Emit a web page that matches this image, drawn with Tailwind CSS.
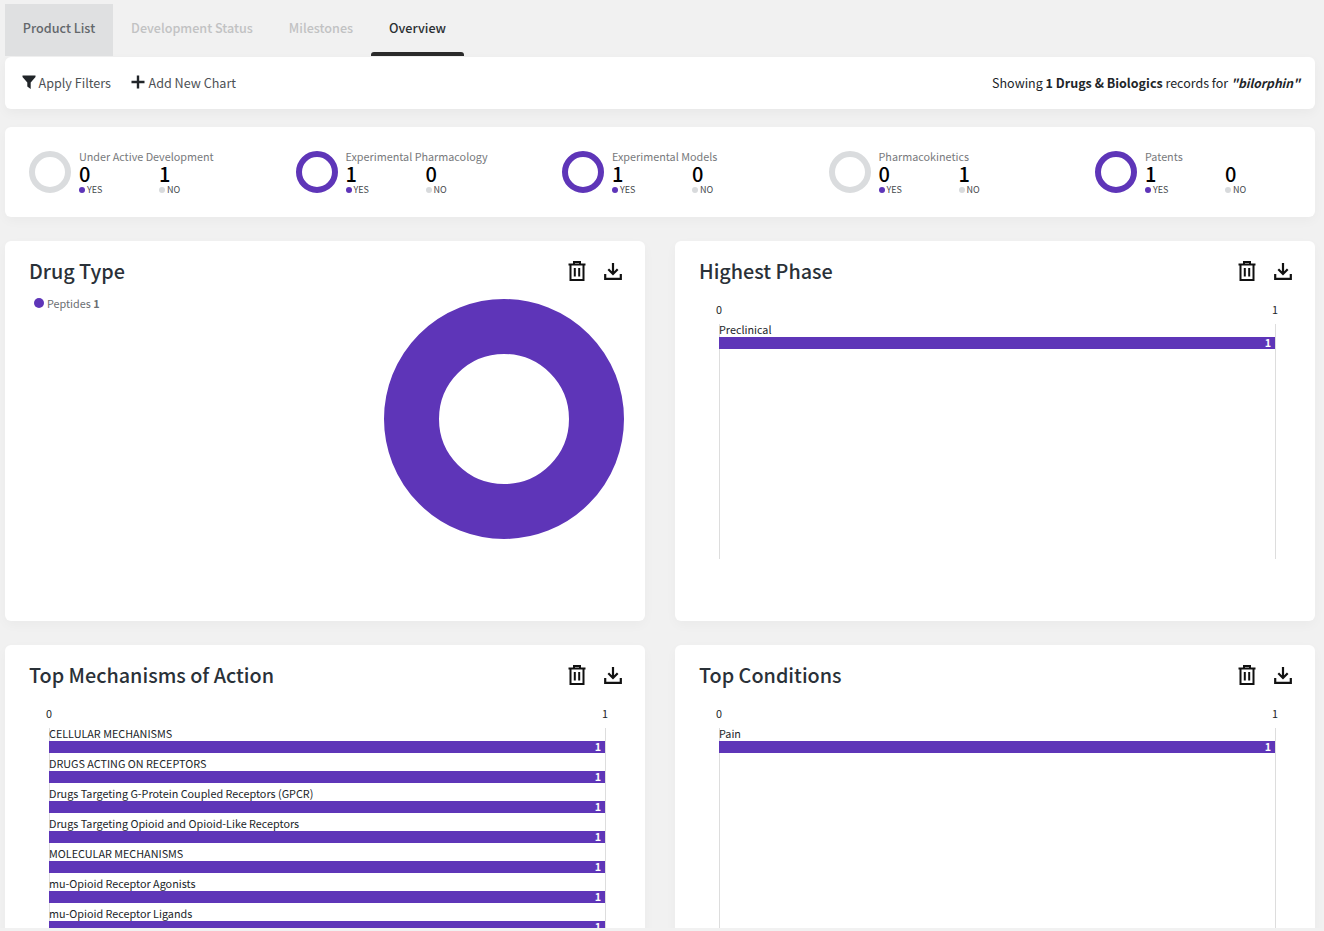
<!DOCTYPE html>
<html lang="en">
<head>
<meta charset="UTF-8">
<meta name="viewport" content="width=device-width, initial-scale=1.0">
<title>Overview</title>
<script src="https://cdn.jsdelivr.net/npm/@tailwindcss/browser@4"></script>
</head>
<body class="bg-[#f1f1f1] font-['Noto_Sans_CJK_SC','Noto_Sans',sans-serif] text-[#212529]">

<div class="pl-[5px] pr-[9px] pt-1 h-[928px] overflow-hidden">
  <!-- tabs -->
  <div class="flex h-[52px] text-[12.6px] font-medium">
    <div class="w-[108px] flex items-center justify-center pb-[4px] bg-[#dfe0e1] text-[#63676b]">Product List</div>
    <div class="w-[158px] flex items-center justify-center pb-[4px] text-[#c1c2c3]">Development Status</div>
    <div class="w-[100px] flex items-center justify-center pb-[4px] text-[#c1c2c3]">Milestones</div>
    <div class="w-[93px] flex flex-col text-[#2b2f33]">
      <div class="flex-1 flex items-center justify-center">Overview</div>
      <div class="h-1 bg-[#2b2b2b] rounded-t-[3px]"></div>
    </div>
  </div>

  <!-- toolbar -->
  <div class="mt-px h-[52px] bg-white rounded-md shadow-[0_4px_12px_rgba(0,0,0,0.04)] flex items-center justify-between pl-[17px] pr-[15px] text-[12.6px]">
    <div class="flex items-center text-[#4d5155]">
      <svg class="w-[14px] h-[14px] mr-[2.500px] -mt-0.5" viewBox="0 0 14 14" fill="#212529"><path d="M0.5 0.5h13v1.500L8.700 7.400V14L5.300 11.600V7.400L0.500 2z"/></svg>
      <span>Apply Filters</span>
      <svg class="w-[14px] h-[14px] ml-[19.500px] mr-[4px] -mt-0.5" viewBox="0 0 14 14" fill="#212529"><path d="M5.800 .5h2.400v5.300h5.300v2.400H8.200v5.300H5.800V8.200H.5V5.800h5.300z"/></svg>
      <span>Add New Chart</span>
    </div>
    <div class="text-[12.500px] text-[#212529]">Showing <b>1 Drugs &amp; Biologics</b> records for <b><i class="text-[12.100px]">"bilorphin"</i></b></div>
  </div>

  <!-- stats -->
  <div class="mt-[18px] h-[90px] bg-white rounded-md shadow-[0_4px_12px_rgba(0,0,0,0.03)] flex items-center pl-6">

    <div class="w-[266.5px] flex items-center">
      <div class="w-[42px] h-[42px] rounded-full border-[6px] border-[#dadcde]"></div>
      <div class="ml-2">
        <div class="text-[10.8px] leading-[14px] mb-px text-[#77797c]">Under Active Development</div>
        <div class="flex">
          <div class="w-20"><div class="text-xl leading-[20px] font-medium text-black">0</div><div class="flex items-center text-[9px] leading-[12px] text-[#44484c]"><span class="w-[6px] h-[6px] rounded-full bg-[#5e35b8] mr-[2px]"></span>YES</div></div>
          <div><div class="text-xl leading-[20px] font-medium text-black">1</div><div class="flex items-center text-[9px] leading-[12px] text-[#44484c]"><span class="w-[6px] h-[6px] rounded-full bg-[#d8dadc] mr-[2px]"></span>NO</div></div>
        </div>
      </div>
    </div>

    <div class="w-[266.5px] flex items-center">
      <div class="w-[42px] h-[42px] rounded-full border-[6px] border-[#5e35b8]"></div>
      <div class="ml-2">
        <div class="text-[10.8px] leading-[14px] mb-px text-[#77797c]">Experimental Pharmacology</div>
        <div class="flex">
          <div class="w-20"><div class="text-xl leading-[20px] font-medium text-black">1</div><div class="flex items-center text-[9px] leading-[12px] text-[#44484c]"><span class="w-[6px] h-[6px] rounded-full bg-[#5e35b8] mr-[2px]"></span>YES</div></div>
          <div><div class="text-xl leading-[20px] font-medium text-black">0</div><div class="flex items-center text-[9px] leading-[12px] text-[#44484c]"><span class="w-[6px] h-[6px] rounded-full bg-[#d8dadc] mr-[2px]"></span>NO</div></div>
        </div>
      </div>
    </div>

    <div class="w-[266.5px] flex items-center">
      <div class="w-[42px] h-[42px] rounded-full border-[6px] border-[#5e35b8]"></div>
      <div class="ml-2">
        <div class="text-[10.8px] leading-[14px] mb-px text-[#77797c]">Experimental Models</div>
        <div class="flex">
          <div class="w-20"><div class="text-xl leading-[20px] font-medium text-black">1</div><div class="flex items-center text-[9px] leading-[12px] text-[#44484c]"><span class="w-[6px] h-[6px] rounded-full bg-[#5e35b8] mr-[2px]"></span>YES</div></div>
          <div><div class="text-xl leading-[20px] font-medium text-black">0</div><div class="flex items-center text-[9px] leading-[12px] text-[#44484c]"><span class="w-[6px] h-[6px] rounded-full bg-[#d8dadc] mr-[2px]"></span>NO</div></div>
        </div>
      </div>
    </div>

    <div class="w-[266.5px] flex items-center">
      <div class="w-[42px] h-[42px] rounded-full border-[6px] border-[#dadcde]"></div>
      <div class="ml-2">
        <div class="text-[10.8px] leading-[14px] mb-px text-[#77797c]">Pharmacokinetics</div>
        <div class="flex">
          <div class="w-20"><div class="text-xl leading-[20px] font-medium text-black">0</div><div class="flex items-center text-[9px] leading-[12px] text-[#44484c]"><span class="w-[6px] h-[6px] rounded-full bg-[#5e35b8] mr-[2px]"></span>YES</div></div>
          <div><div class="text-xl leading-[20px] font-medium text-black">1</div><div class="flex items-center text-[9px] leading-[12px] text-[#44484c]"><span class="w-[6px] h-[6px] rounded-full bg-[#d8dadc] mr-[2px]"></span>NO</div></div>
        </div>
      </div>
    </div>

    <div class="flex items-center">
      <div class="w-[42px] h-[42px] rounded-full border-[6px] border-[#5e35b8]"></div>
      <div class="ml-2">
        <div class="text-[10.8px] leading-[14px] mb-px text-[#77797c]">Patents</div>
        <div class="flex">
          <div class="w-20"><div class="text-xl leading-[20px] font-medium text-black">1</div><div class="flex items-center text-[9px] leading-[12px] text-[#44484c]"><span class="w-[6px] h-[6px] rounded-full bg-[#5e35b8] mr-[2px]"></span>YES</div></div>
          <div><div class="text-xl leading-[20px] font-medium text-black">0</div><div class="flex items-center text-[9px] leading-[12px] text-[#44484c]"><span class="w-[6px] h-[6px] rounded-full bg-[#d8dadc] mr-[2px]"></span>NO</div></div>
        </div>
      </div>
    </div>
  </div>

  <!-- chart cards -->
  <div class="mt-6 grid grid-cols-[640px_640px] gap-x-[30px] gap-y-6">

    <div class="h-[380px] bg-white rounded-md shadow-[0_4px_12px_rgba(0,0,0,0.03)] pl-6 pr-[23px] pt-4">
      <div class="flex justify-between items-center h-[30px]">
        <h2 class="text-[19.8px] font-medium text-[#2a3138] pb-[2px]">Drug Type</h2>
        <div class="flex gap-[18px] -mt-[2px]">
          <svg class="w-[18px] h-[20px]" viewBox="0 0 18 20" fill="none" stroke="#111" stroke-width="2"><path d="M.5 3.500h17M6 3V1h6v2M2.500 3.500V19h13V3.500M6.800 7v8.500M11.200 7v8.500"/></svg>
          <svg class="w-[18px] h-[18px] mt-px" viewBox="0 0 18 18" fill="none" stroke="#111" stroke-width="2.200"><path d="M9 1v10.500M4.300 7.300L9 12l4.700-4.700M1.200 12v4.800h15.600V12"/></svg>
        </div>
      </div>
      <div class="flex items-center h-4 text-[10.8px] text-[#6b6f73] mt-2 ml-[5px]">
        <span class="w-[10px] h-[10px] rounded-full bg-[#5e35b8] mr-[3px]"></span>Peptides&nbsp;<b>1</b>
      </div>
      <div class="flex justify-end -mt-[12px] -mr-[2px]">
        <svg class="w-[240px] h-[240px]" viewBox="0 0 240 240"><circle cx="120" cy="120" r="92.5" fill="none" stroke="#5e35b8" stroke-width="55"/></svg>
      </div>
    </div>

    <div class="h-[380px] bg-white rounded-md shadow-[0_4px_12px_rgba(0,0,0,0.03)] pl-6 pr-[23px] pt-4">
      <div class="flex justify-between items-center h-[30px]">
        <h2 class="text-[19.8px] font-medium text-[#2a3138] pb-[2px]">Highest Phase</h2>
        <div class="flex gap-[18px] -mt-[2px]">
          <svg class="w-[18px] h-[20px]" viewBox="0 0 18 20" fill="none" stroke="#111" stroke-width="2"><path d="M.5 3.500h17M6 3V1h6v2M2.500 3.500V19h13V3.500M6.800 7v8.500M11.200 7v8.500"/></svg>
          <svg class="w-[18px] h-[18px] mt-px" viewBox="0 0 18 18" fill="none" stroke="#111" stroke-width="2.200"><path d="M9 1v10.500M4.300 7.300L9 12l4.700-4.700M1.200 12v4.800h15.600V12"/></svg>
        </div>
      </div>
      <div class="ml-5 w-[557px] mt-[15px]">
        <div class="flex justify-between text-[10.8px] leading-[14px] -ml-[3px] -mr-[2px]"><span>0</span><span>1</span></div>
        <div class="h-[235px] mt-[8px] border-x border-[#dddddd]">
          <div class="text-[10.8px] leading-[11px] h-[13px] -ml-px whitespace-nowrap">Preclinical</div>
          <div class="h-3 -ml-px bg-[#5e35b8] text-white text-[10.8px] leading-[11px] font-bold text-right pr-1">1</div>
        </div>
      </div>
    </div>

    <div class="h-[380px] bg-white rounded-md shadow-[0_4px_12px_rgba(0,0,0,0.03)] pl-6 pr-[23px] pt-4">
      <div class="flex justify-between items-center h-[30px]">
        <h2 class="text-[19.8px] font-medium text-[#2a3138] pb-[2px]">Top Mechanisms of Action</h2>
        <div class="flex gap-[18px] -mt-[2px]">
          <svg class="w-[18px] h-[20px]" viewBox="0 0 18 20" fill="none" stroke="#111" stroke-width="2"><path d="M.5 3.500h17M6 3V1h6v2M2.500 3.500V19h13V3.500M6.800 7v8.500M11.200 7v8.500"/></svg>
          <svg class="w-[18px] h-[18px] mt-px" viewBox="0 0 18 18" fill="none" stroke="#111" stroke-width="2.200"><path d="M9 1v10.500M4.300 7.300L9 12l4.700-4.700M1.200 12v4.800h15.600V12"/></svg>
        </div>
      </div>
      <div class="ml-5 w-[557px] mt-[15px]">
        <div class="flex justify-between text-[10.8px] leading-[14px] -ml-[3px] -mr-[2px]"><span>0</span><span>1</span></div>
        <div class="h-[235px] mt-[8px] border-x border-[#dddddd]">
          <div class="text-[10.8px] leading-[11px] h-[13px] -ml-px whitespace-nowrap">CELLULAR MECHANISMS</div>
          <div class="h-3 -ml-px mb-[5px] bg-[#5e35b8] text-white text-[10.8px] leading-[11px] font-bold text-right pr-1">1</div>
          <div class="text-[10.8px] leading-[11px] h-[13px] -ml-px whitespace-nowrap">DRUGS ACTING ON RECEPTORS</div>
          <div class="h-3 -ml-px mb-[5px] bg-[#5e35b8] text-white text-[10.8px] leading-[11px] font-bold text-right pr-1">1</div>
          <div class="text-[10.8px] leading-[11px] h-[13px] -ml-px whitespace-nowrap">Drugs Targeting G-Protein Coupled Receptors (GPCR)</div>
          <div class="h-3 -ml-px mb-[5px] bg-[#5e35b8] text-white text-[10.8px] leading-[11px] font-bold text-right pr-1">1</div>
          <div class="text-[10.8px] leading-[11px] h-[13px] -ml-px whitespace-nowrap">Drugs Targeting Opioid and Opioid-Like Receptors</div>
          <div class="h-3 -ml-px mb-[5px] bg-[#5e35b8] text-white text-[10.8px] leading-[11px] font-bold text-right pr-1">1</div>
          <div class="text-[10.8px] leading-[11px] h-[13px] -ml-px whitespace-nowrap">MOLECULAR MECHANISMS</div>
          <div class="h-3 -ml-px mb-[5px] bg-[#5e35b8] text-white text-[10.8px] leading-[11px] font-bold text-right pr-1">1</div>
          <div class="text-[10.8px] leading-[11px] h-[13px] -ml-px whitespace-nowrap">mu-Opioid Receptor Agonists</div>
          <div class="h-3 -ml-px mb-[5px] bg-[#5e35b8] text-white text-[10.8px] leading-[11px] font-bold text-right pr-1">1</div>
          <div class="text-[10.8px] leading-[11px] h-[13px] -ml-px whitespace-nowrap">mu-Opioid Receptor Ligands</div>
          <div class="h-3 -ml-px mb-[5px] bg-[#5e35b8] text-white text-[10.8px] leading-[11px] font-bold text-right pr-1">1</div>
        </div>
      </div>
    </div>

    <div class="h-[380px] bg-white rounded-md shadow-[0_4px_12px_rgba(0,0,0,0.03)] pl-6 pr-[23px] pt-4">
      <div class="flex justify-between items-center h-[30px]">
        <h2 class="text-[19.8px] font-medium text-[#2a3138] pb-[2px]">Top Conditions</h2>
        <div class="flex gap-[18px] -mt-[2px]">
          <svg class="w-[18px] h-[20px]" viewBox="0 0 18 20" fill="none" stroke="#111" stroke-width="2"><path d="M.5 3.500h17M6 3V1h6v2M2.500 3.500V19h13V3.500M6.800 7v8.500M11.200 7v8.500"/></svg>
          <svg class="w-[18px] h-[18px] mt-px" viewBox="0 0 18 18" fill="none" stroke="#111" stroke-width="2.200"><path d="M9 1v10.500M4.300 7.300L9 12l4.700-4.700M1.200 12v4.800h15.600V12"/></svg>
        </div>
      </div>
      <div class="ml-5 w-[557px] mt-[15px]">
        <div class="flex justify-between text-[10.8px] leading-[14px] -ml-[3px] -mr-[2px]"><span>0</span><span>1</span></div>
        <div class="h-[235px] mt-[8px] border-x border-[#dddddd]">
          <div class="text-[10.8px] leading-[11px] h-[13px] -ml-px whitespace-nowrap">Pain</div>
          <div class="h-3 -ml-px bg-[#5e35b8] text-white text-[10.8px] leading-[11px] font-bold text-right pr-1">1</div>
        </div>
      </div>
    </div>

  </div>
</div>

</body>
</html>
